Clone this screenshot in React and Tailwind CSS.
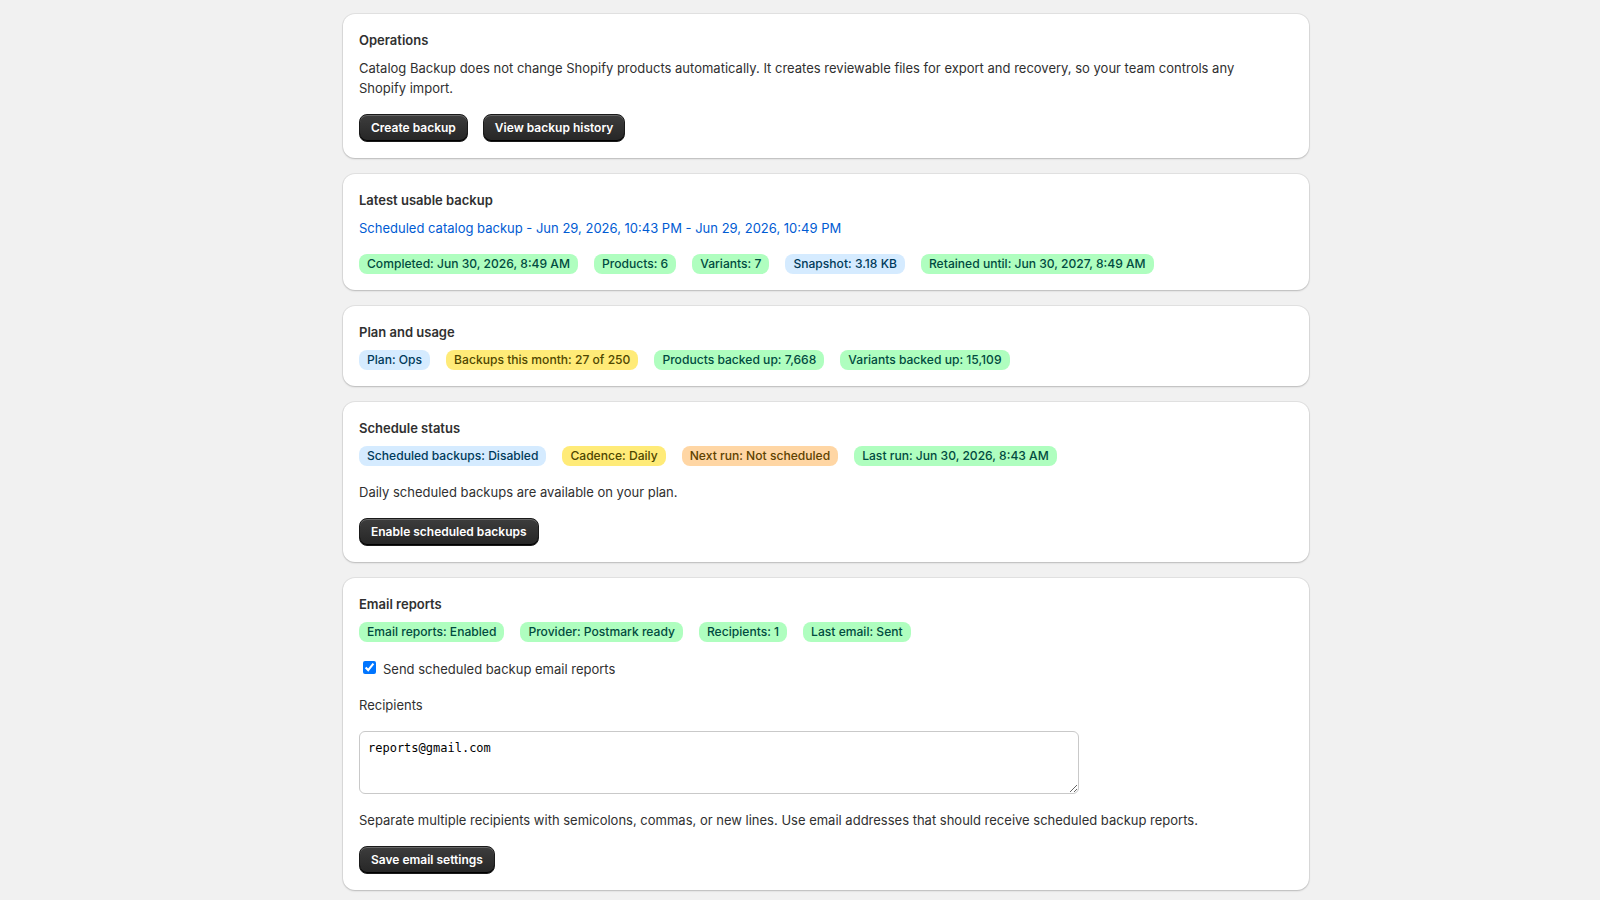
import React, { useState } from "react";

const badgeTones = {
	success: "bg-[#affebf] text-[#014b40]",
	info: "bg-[#d5ebff] text-[#003a5a]",
	attention: "bg-[#ffeb78] text-[#4f4700]",
	warning: "bg-[#ffd6a4] text-[#5e4200]",
};

function Badge({ tone = "success", children }) {
	return (
		<span
			className={`inline-flex items-center h-5 px-2 rounded-lg text-[12.1px] leading-5 font-medium ${badgeTones[tone]}`}
		>
			{children}
		</span>
	);
}

function Button({ children }) {
	return (
		<button className="h-[28px] px-[11px] rounded-lg text-[12px] font-semibold text-white bg-gradient-to-b from-[#3d3d3d] to-[#262626] border border-[#1a1a1a] shadow-[inset_0_1px_0_rgba(255,255,255,0.22),inset_0_-1px_0_#000]">
			{children}
		</button>
	);
}

function Card({ title, children }) {
	return (
		<div className="bg-white rounded-xl p-4 shadow-[0_0_0_1px_rgba(0,0,0,0.06),0_1px_2px_rgba(0,0,0,0.18)]">
			<h2 className="text-[13px] leading-5 font-semibold text-[#303030]">
				{title}
			</h2>
			{children}
		</div>
	);
}

export default function App() {
	const [sendReports, setSendReports] = useState(true);
	const [recipients, setRecipients] = useState("reports@gmail.com");

	return (
		<div
			className="min-h-screen bg-[#f1f1f1] text-[#303030] text-[13px] leading-5"
			style={{ fontFamily: "Inter, 'Noto Sans', sans-serif" }}
		>
			<div className="w-[966px] ml-[343px] pt-[14px] pb-[10px] flex flex-col gap-4">
				<Card title="Operations">
					<p className="mt-2 pr-4">
						Catalog Backup does not change Shopify products automatically. It
						creates reviewable files for export and recovery, so your team
						controls any Shopify import.
					</p>
					<div className="mt-4 flex gap-[15px]">
						<Button>Create backup</Button>
						<Button>View backup history</Button>
					</div>
				</Card>

				<Card title="Latest usable backup">
					<a href="#" className="block mt-2 text-[#005bd3]">
						Scheduled catalog backup - Jun 29, 2026, 10:43 PM - Jun 29, 2026,
						10:49 PM
					</a>
					<div className="mt-4 flex flex-wrap gap-4">
						<Badge>Completed: Jun 30, 2026, 8:49 AM</Badge>
						<Badge>Products: 6</Badge>
						<Badge>Variants: 7</Badge>
						<Badge tone="info">Snapshot: 3.18 KB</Badge>
						<Badge>Retained until: Jun 30, 2027, 8:49 AM</Badge>
					</div>
				</Card>

				<Card title="Plan and usage">
					<div className="mt-2 flex flex-wrap gap-4">
						<Badge tone="info">Plan: Ops</Badge>
						<Badge tone="attention">Backups this month: 27 of 250</Badge>
						<Badge>Products backed up: 7,668</Badge>
						<Badge>Variants backed up: 15,109</Badge>
					</div>
				</Card>

				<Card title="Schedule status">
					<div className="mt-2 flex flex-wrap gap-4">
						<Badge tone="info">Scheduled backups: Disabled</Badge>
						<Badge tone="attention">Cadence: Daily</Badge>
						<Badge tone="warning">Next run: Not scheduled</Badge>
						<Badge>Last run: Jun 30, 2026, 8:43 AM</Badge>
					</div>
					<p className="mt-4">Daily scheduled backups are available on your plan.</p>
					<div className="mt-4">
						<Button>Enable scheduled backups</Button>
					</div>
				</Card>

				<Card title="Email reports">
					<div className="mt-2 flex flex-wrap gap-4">
						<Badge>Email reports: Enabled</Badge>
						<Badge>Provider: Postmark ready</Badge>
						<Badge>Recipients: 1</Badge>
						<Badge>Last email: Sent</Badge>
					</div>
					<label className="mt-[17px] flex items-center gap-[7px] pl-1">
						<input
							type="checkbox"
							checked={sendReports}
							onChange={(e) => setSendReports(e.target.checked)}
							className="w-[13px] h-[13px] accent-[#0075ff] -mt-[3px]"
						/>
						<span>Send scheduled backup email reports</span>
					</label>
					<p className="mt-4">Recipients</p>
					<textarea
						value={recipients}
						onChange={(e) => setRecipients(e.target.value)}
						className="mt-4 block w-[720px] h-[63px] px-2 py-2 border border-[#c9c9c9] rounded-md text-[12px] leading-4 text-black"
						style={{ fontFamily: "'DejaVu Sans Mono', monospace" }}
					/>
					<p className="mt-4">
						Separate multiple recipients with semicolons, commas, or new lines.
						Use email addresses that should receive scheduled backup reports.
					</p>
					<div className="mt-4">
						<Button>Save email settings</Button>
					</div>
				</Card>
			</div>
		</div>
	);
}
